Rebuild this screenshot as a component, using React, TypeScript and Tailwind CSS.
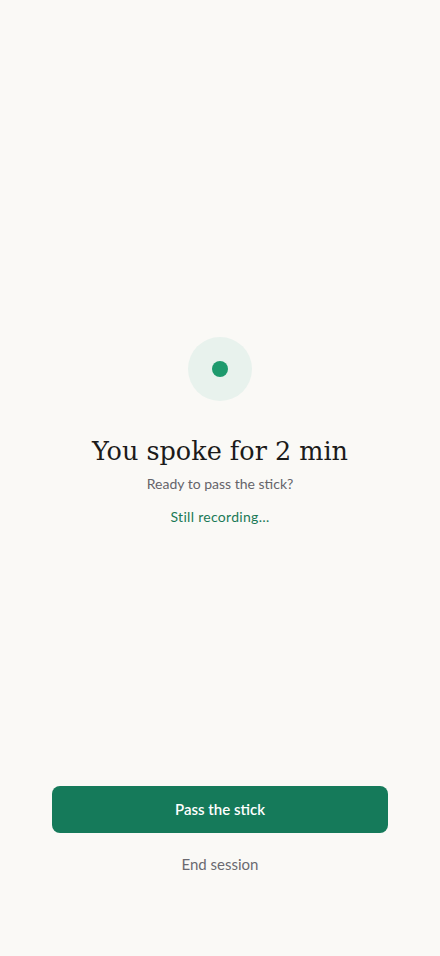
import React from "react";

export default function App() {
  return (
    <div className="w-full h-[956px] bg-[#faf9f6] flex flex-col">
      <main className="flex flex-col items-center pt-[337px]">
        <div className="w-16 h-16 rounded-full bg-[#e8f2ed] flex items-center justify-center">
          <div className="w-4 h-4 rounded-full bg-[#1e9a6d]" />
        </div>
        <h1 className="mt-[30px] text-[25.5px] leading-[40px] text-[#1c1b1a] font-['DejaVu_Serif',serif]">
          You spoke for 2 min
        </h1>
        <p className="mt-[3px] text-[14px] leading-[20px] text-[#65646a] font-['Lato',sans-serif]">
          Ready to pass the stick?
        </p>
        <p className="mt-[13px] text-[14px] leading-[20px] text-[#1b7a56] tracking-[0.3px] font-['Lato',sans-serif]">
          Still recording…
        </p>
      </main>
      <footer className="mt-auto px-[52px] pb-[81px] flex flex-col items-center font-['Lato',sans-serif]">
        <button className="w-full h-[47px] rounded-[8px] bg-[#157a5a] text-white text-[15px] font-semibold">
          Pass the stick
        </button>
        <button className="mt-[20px] text-[15px] leading-[22px] text-[#6a6970]">
          End session
        </button>
      </footer>
    </div>
  );
}
